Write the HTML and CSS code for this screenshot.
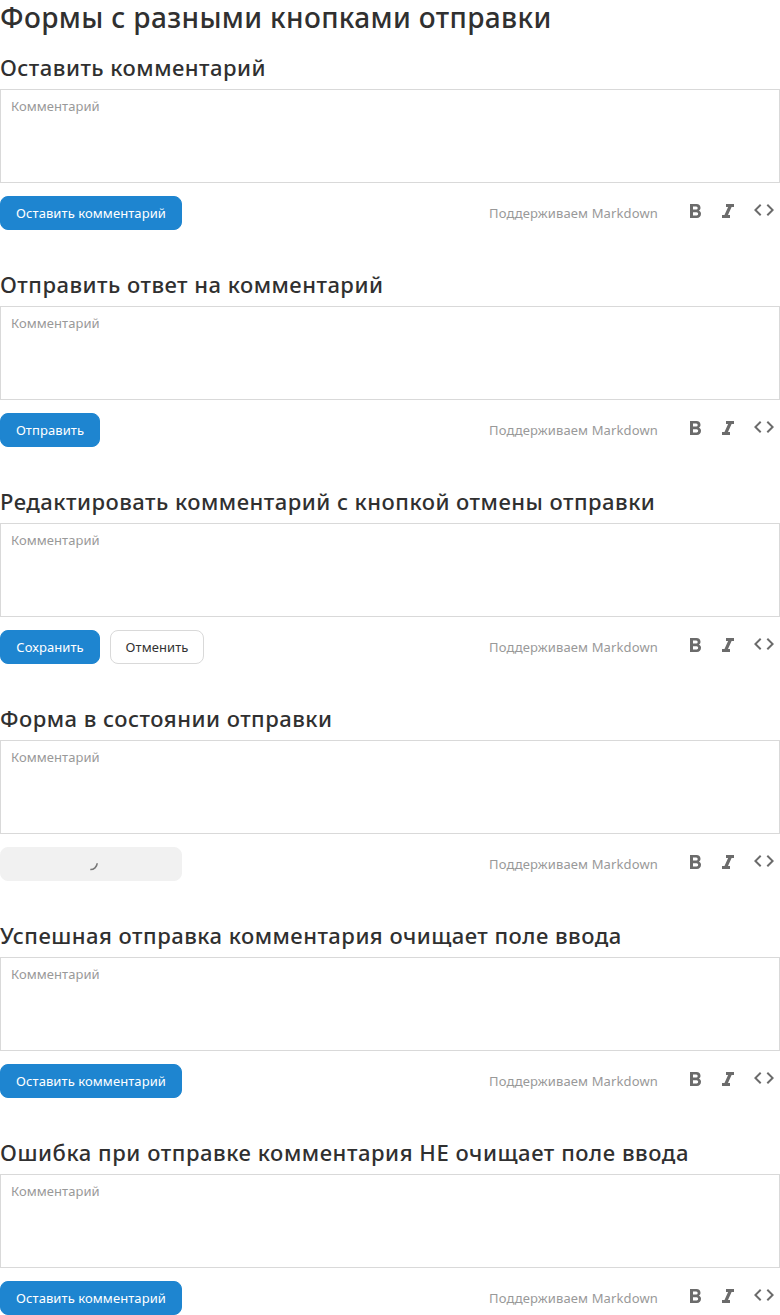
FILE: index.html
```html
<!DOCTYPE html>
<html lang="ru"><head><meta charset="utf-8"><title>Формы</title><link rel="stylesheet" href="styles.css"></head>
<body>
<svg class="sprite" aria-hidden="true">
<symbol id="bold" viewBox="0 0 12 14"><path fill-rule="evenodd" d="M0 0h6.5C9 0 10.5 1.6 10.5 3.8c0 1.3-.6 2.2-1.5 2.9 1.3.6 2 1.7 2 3.1 0 2.4-1.6 4.2-4.1 4.2H0zM3 2.6v3h3.2a1.5 1.5 0 0 0 0-3zM3 8.2v3.2h3.6a1.6 1.6 0 0 0 0-3.2z"/></symbol>
<symbol id="italic" viewBox="0 0 12 14"><path d="M4 0h8v2.9H9.6L6 11.1h2V14H0v-2.9h2.5l3.6-8.2H4z"/></symbol>
<symbol id="code" viewBox="0 0 24 24"><path d="M9.4 16.6 4.8 12l4.6-4.6L8 6l-6 6 6 6zm5.2 0 4.6-4.6-4.6-4.6L16 6l6 6-6 6z"/></symbol>
</svg>
<main id="forms" class="page"><h1 class="title">Формы с разными кнопками отправки</h1></main>
<script src="app.js"></script>
</body></html>
```

FILE: app.js
```js
const send = '<button class="button primary wide">Оставить комментарий</button>';
const forms = [
  ['Оставить комментарий', send],
  ['Отправить ответ на комментарий', '<button class="button primary short">Отправить</button>'],
  ['Редактировать комментарий с кнопкой отмены отправки', '<button class="button primary short">Сохранить</button><button class="button cancel">Отменить</button>'],
  ['Форма в состоянии отправки', '<button class="button loading wide" aria-label="Отправка"><svg class="spinner" viewBox="0 0 8 8"><path d="M7.2.3A6.7 6.7 0 0 1 .3 6.5"/></svg></button>'],
  ['Успешная отправка комментария очищает поле ввода', send],
  ['Ошибка при отправке комментария НЕ очищает поле ввода', send]
];
const icon = name => `<svg class="icon ${name}"><use href="#${name}"/></svg>`;
document.getElementById('forms').insertAdjacentHTML('beforeend', forms.map(([title, buttons]) => `
<section class="form"><h2 class="subtitle">${title}</h2>
<div class="field">Комментарий</div>
<div class="footer">${buttons}<span class="hint">Поддерживаем Markdown</span>${icon('bold')}${icon('italic')}${icon('code')}</div></section>`).join(''));
```

FILE: styles.css
```css
* { box-sizing: border-box; }
body { margin: 0; background: #fff; color: #303030; font-family: "Noto Sans", "Open Sans", sans-serif; }
.sprite { display: none; }
.page { width: 780px; height: 1315px; }
.title { margin: 0; height: 53px; font-size: 28px; line-height: 35px; font-weight: 500; letter-spacing: .37px; white-space: nowrap; }
.form { height: 217px; }
.form:last-child { height: 177px; }
.subtitle { margin: 0; height: 36px; font-size: 22px; line-height: 28px; font-weight: 500; letter-spacing: .48px; white-space: nowrap; }
.form:last-child .subtitle { letter-spacing: .55px; }
.field { height: 94px; border: 1px solid #d9d9d9; padding: 6px 10px; font-size: 13px; line-height: 20px; letter-spacing: .06px; color: #999; }
.footer { height: 34px; margin-top: 13px; display: flex; align-items: center; }
.button { height: 34px; padding: 0; border: 1px solid #1e85d0; border-radius: 8px; font: 13px/20px "Noto Sans", sans-serif; letter-spacing: .08px; white-space: nowrap; }
.primary { background: #1e85d0; color: #fff; }
.wide { width: 182px; }
.short { width: 100px; }
.cancel { width: 94px; margin-left: 10px; background: #fff; border-color: #d9d9d9; color: #333; }
.loading { display: flex; align-items: center; justify-content: center; background: #f1f1f1; border-color: #f1f1f1; }
.spinner { width: 8px; height: 8px; margin: 6px 0 0 5px; fill: none; stroke: #777; stroke-width: 1.6; }
.hint { margin-left: auto; margin-right: 32px; font-size: 13px; letter-spacing: .13px; color: #999; }
.icon { width: 12px; height: 14px; fill: #6b6b6b; margin-top: -4px; }
.italic { margin-left: 20px; }
.code { width: 24px; height: 24px; margin-left: 18px; margin-right: 4px; margin-top: -6px; }
```
